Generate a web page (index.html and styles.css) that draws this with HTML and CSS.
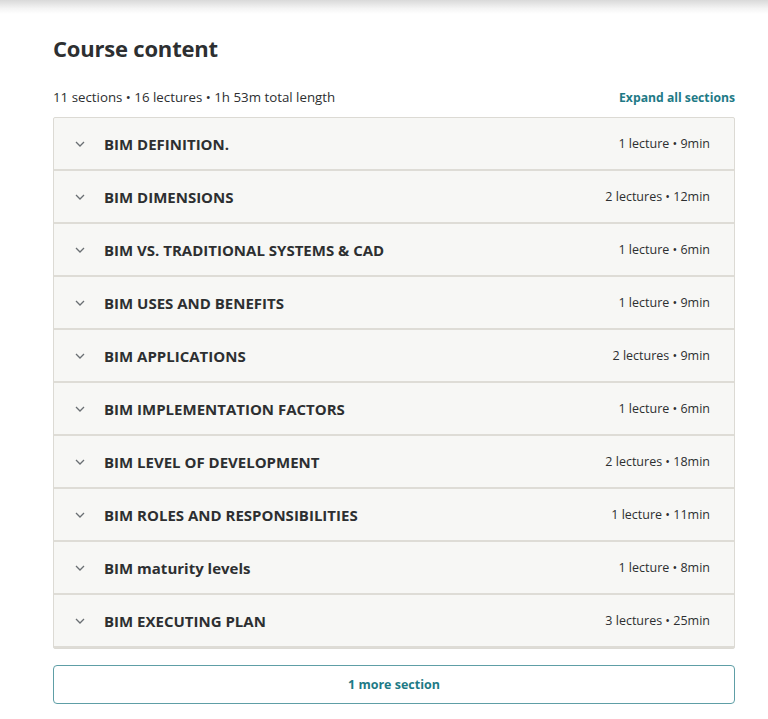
FILE: index.html
```html
<!DOCTYPE html>
<html lang="en">
<head>
<meta charset="utf-8">
<title>Course content</title>
<link rel="stylesheet" href="styles.css">
</head>
<body>
<div class="topshade"></div>
<main class="content">
  <h2 class="title">Course content</h2>
  <div class="meta-row">
    <span class="meta">11 sections • 16 lectures • 1h 53m total length</span>
    <a class="expand" href="#">Expand all sections</a>
  </div>
  <div class="sections">
    <div class="row"><span class="chev"><svg viewBox="0 0 10 6" width="10" height="6"><path d="M1 1l4 4 4-4" fill="none" stroke="#6a6f73" stroke-width="1.3"/></svg></span><span class="name">BIM DEFINITION.</span><span class="info">1 lecture • 9min</span></div>
    <div class="row"><span class="chev"><svg viewBox="0 0 10 6" width="10" height="6"><path d="M1 1l4 4 4-4" fill="none" stroke="#6a6f73" stroke-width="1.3"/></svg></span><span class="name">BIM DIMENSIONS</span><span class="info">2 lectures • 12min</span></div>
    <div class="row"><span class="chev"><svg viewBox="0 0 10 6" width="10" height="6"><path d="M1 1l4 4 4-4" fill="none" stroke="#6a6f73" stroke-width="1.3"/></svg></span><span class="name">BIM VS. TRADITIONAL SYSTEMS &amp; CAD</span><span class="info">1 lecture • 6min</span></div>
    <div class="row"><span class="chev"><svg viewBox="0 0 10 6" width="10" height="6"><path d="M1 1l4 4 4-4" fill="none" stroke="#6a6f73" stroke-width="1.3"/></svg></span><span class="name">BIM USES AND BENEFITS</span><span class="info">1 lecture • 9min</span></div>
    <div class="row"><span class="chev"><svg viewBox="0 0 10 6" width="10" height="6"><path d="M1 1l4 4 4-4" fill="none" stroke="#6a6f73" stroke-width="1.3"/></svg></span><span class="name">BIM APPLICATIONS</span><span class="info">2 lectures • 9min</span></div>
    <div class="row"><span class="chev"><svg viewBox="0 0 10 6" width="10" height="6"><path d="M1 1l4 4 4-4" fill="none" stroke="#6a6f73" stroke-width="1.3"/></svg></span><span class="name">BIM IMPLEMENTATION FACTORS</span><span class="info">1 lecture • 6min</span></div>
    <div class="row"><span class="chev"><svg viewBox="0 0 10 6" width="10" height="6"><path d="M1 1l4 4 4-4" fill="none" stroke="#6a6f73" stroke-width="1.3"/></svg></span><span class="name">BIM LEVEL OF DEVELOPMENT</span><span class="info">2 lectures • 18min</span></div>
    <div class="row"><span class="chev"><svg viewBox="0 0 10 6" width="10" height="6"><path d="M1 1l4 4 4-4" fill="none" stroke="#6a6f73" stroke-width="1.3"/></svg></span><span class="name">BIM ROLES AND RESPONSIBILITIES</span><span class="info">1 lecture • 11min</span></div>
    <div class="row"><span class="chev"><svg viewBox="0 0 10 6" width="10" height="6"><path d="M1 1l4 4 4-4" fill="none" stroke="#6a6f73" stroke-width="1.3"/></svg></span><span class="name">BIM maturity levels</span><span class="info">1 lecture • 8min</span></div>
    <div class="row"><span class="chev"><svg viewBox="0 0 10 6" width="10" height="6"><path d="M1 1l4 4 4-4" fill="none" stroke="#6a6f73" stroke-width="1.3"/></svg></span><span class="name">BIM EXECUTING PLAN</span><span class="info">3 lectures • 25min</span></div>
  </div>
  <button class="more">1 more section</button>
</main>
</body>
</html>
```
FILE: styles.css
```css
html, body {
  margin: 0;
  padding: 0;
  background: #ffffff;
}
body {
  font-family: "Open Sans", "Noto Sans", sans-serif;
  color: #2d2f31;
}
.topshade {
  height: 14px;
  background: linear-gradient(#d9d9d9, #f4f4f4 60%, #ffffff);
}
.content {
  width: 682px;
  margin: 0 0 0 53px;
}
.title {
  margin: 20px 0 0 0;
  font-size: 22px;
  line-height: 28px;
  font-weight: 700;
  color: #2d2f31;
  letter-spacing: -0.2px;
}
.meta-row {
  display: flex;
  justify-content: space-between;
  align-items: center;
  margin-top: 25px;
  height: 20px;
}
.meta {
  font-size: 13.3px;
  color: #2d2f31;
}
.expand {
  font-size: 12.2px;
  font-weight: 700;
  color: #1e7a86;
  text-decoration: none;
}
.sections {
  margin-top: 10px;
  border: 1px solid #dcdad4;
  border-radius: 2px;
  background: #f7f7f5;
}
.row {
  display: flex;
  align-items: center;
  height: 51px;
  padding: 0 24px 0 20px;
  border-bottom: 2px solid #dedcd6;
}
.chev {
  display: flex;
  width: 29px;
  justify-content: flex-start;
  padding-left: 1px;
}
.name {
  flex: 1;
  font-size: 15px;
  font-weight: 700;
  color: #2d2f31;
}
.info {
  font-size: 12.5px;
  color: #2d2f31;
}
.more {
  display: block;
  width: 100%;
  height: 39px;
  margin-top: 16px;
  border: 1px solid #5e9ea6;
  border-radius: 4px;
  background: #ffffff;
  font-family: "Open Sans", "Noto Sans", sans-serif;
  font-size: 12.5px;
  font-weight: 700;
  color: #1e7a86;
}
```
